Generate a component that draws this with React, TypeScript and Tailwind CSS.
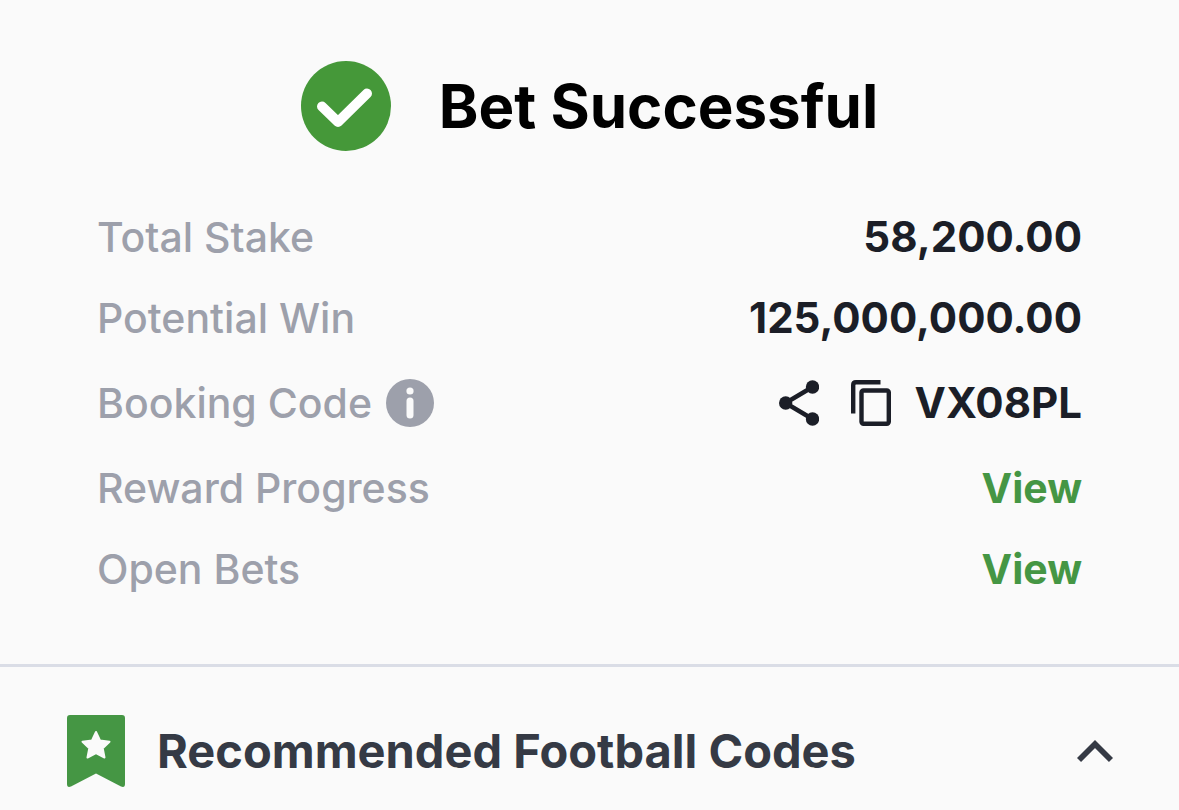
import { useState, type ReactNode } from "react";

const CheckBadge = () => (
  <svg viewBox="0 0 90 90" className="size-[90px] shrink-0" aria-hidden="true">
    <circle cx="45" cy="45" r="45" fill="#459839" />
    <path
      d="M21 45.5L37 61L66 32.5"
      fill="none"
      stroke="#fff"
      strokeWidth="10"
      strokeLinecap="round"
      strokeLinejoin="round"
    />
  </svg>
);

const InfoIcon = () => (
  <svg viewBox="0 0 48 48" className="size-12" aria-hidden="true">
    <circle cx="24" cy="24" r="24" fill="#9da0ab" />
    <circle cx="24" cy="12" r="3.6" fill="#fafafa" />
    <path d="M24 22V36" stroke="#fafafa" strokeWidth="7" strokeLinecap="round" />
  </svg>
);

const ShareIcon = () => (
  <svg viewBox="0 0 40 46" className="h-[46px] w-10" aria-hidden="true">
    <path d="M33.5 7L6.5 23L33.5 39" fill="none" stroke="#1b1e27" strokeWidth="4.5" />
    <circle cx="33.5" cy="7" r="6.7" fill="#1b1e27" />
    <circle cx="6.7" cy="23" r="6.7" fill="#1b1e27" />
    <circle cx="33.5" cy="39" r="6.7" fill="#1b1e27" />
  </svg>
);

const CopyIcon = () => (
  <svg viewBox="0 0 40 46" className="h-[46px] w-10" aria-hidden="true">
    <g fill="none" stroke="#1b1e27" strokeWidth="4.4">
      <path d="M2.2 33.5V5Q2.2 2.2 5 2.2H29.5" />
      <rect x="10.5" y="10.5" width="27.3" height="33.3" rx="2" />
    </g>
  </svg>
);

const BookmarkIcon = () => (
  <svg viewBox="0 0 58 72" className="h-[72px] w-[58px] shrink-0" aria-hidden="true">
    <path
      d="M3 0H55Q58 0 58 3V69Q58 73 54 71.5L29 58.5L4 71.5Q0 73 0 69V3Q0 0 3 0Z"
      fill="#459644"
    />
    <path
      d="M29 17L33 25.5L42.5 26.7L35.7 33.2L37.5 42.5L29 38.2L20.5 42.5L22.3 33.2L15.5 26.7L25 25.5Z"
      fill="#fafafa"
      stroke="#fafafa"
      strokeWidth="2"
      strokeLinejoin="round"
    />
  </svg>
);

const Chevron = ({ open }: { open: boolean }) => (
  <svg
    viewBox="0 0 36 24"
    className={open ? "h-6 w-9 shrink-0" : "h-6 w-9 shrink-0 rotate-180"}
    aria-hidden="true"
  >
    <path d="M2 21L18 5L34 21" fill="none" stroke="#353a45" strokeWidth="5.8" />
  </svg>
);

const Row = ({ label, children }: { label: ReactNode; children: ReactNode }) => (
  <div className="flex min-h-[81px] items-center justify-between">
    <dt className="flex items-center gap-3.5 text-[41px] font-medium text-[#9da0ab]">{label}</dt>
    <dd className="flex items-center text-[42px] font-bold text-[#1b1e27]">{children}</dd>
  </div>
);

const App = () => {
  const [open, setOpen] = useState(true);
  const code = "VX08PL";

  return (
    <main className="min-h-screen bg-[#fafafa] font-['Inter',sans-serif]">
      <section className="border-b-[3px] border-[#dadde6] px-[97px] pt-[61px] pb-[55px]">
        <header className="flex items-center justify-center gap-12">
          <CheckBadge />
          <h1 className="text-[60px] leading-[80px] font-bold text-black">Bet Successful</h1>
        </header>

        <dl className="mt-[45px] leading-[52px]">
          <Row label="Total Stake">58,200.00</Row>
          <Row label="Potential Win">125,000,000.00</Row>
          <div className="py-1">
            <Row
              label={
                <>
                  Booking Code
                  <button type="button" aria-label="About booking codes">
                    <InfoIcon />
                  </button>
                </>
              }
            >
              <button type="button" aria-label="Share booking code" className="mr-8">
                <ShareIcon />
              </button>
              <button
                type="button"
                aria-label="Copy booking code"
                className="mr-6"
                onClick={() => navigator.clipboard?.writeText(code)}
              >
                <CopyIcon />
              </button>
              {code}
            </Row>
          </div>
          <Row label="Reward Progress">
            <a href="#rewards" className="text-[41px] text-[#459644]">View</a>
          </Row>
          <Row label="Open Bets">
            <a href="#open-bets" className="text-[41px] text-[#459644]">View</a>
          </Row>
        </dl>
      </section>

      <section>
        <h2>
          <button
            type="button"
            aria-expanded={open}
            onClick={() => setOpen(!open)}
            className="flex w-full items-center pt-12 pr-[66px] pb-5 pl-[67px] text-left"
          >
            <BookmarkIcon />
            <span className="ml-8 flex-1 text-[47px] leading-[56px] font-bold text-[#353a45]">
              Recommended Football Codes
            </span>
            <Chevron open={open} />
          </button>
        </h2>
      </section>
    </main>
  );
};

export default App;
